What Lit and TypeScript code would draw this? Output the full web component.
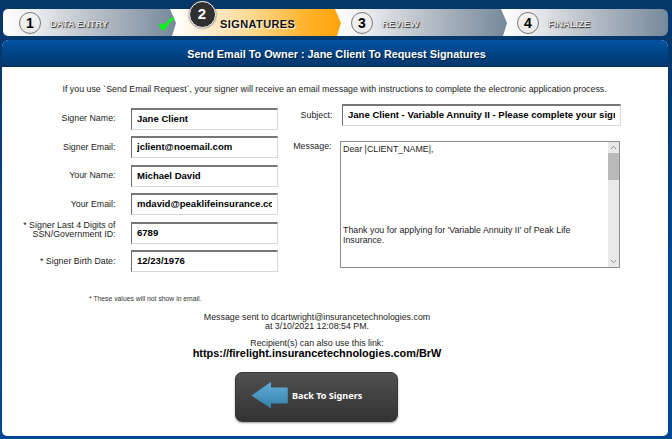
import { LitElement, html, css, svg } from "lit";
import { customElement, property } from "lit/decorators.js";
import { classMap } from "lit/directives/class-map.js";

@customElement("wizard-step")
class WizardStep extends LitElement {
  @property({ type: Number }) number = 1;
  @property() label = "";
  @property({ type: Boolean }) active = false;
  @property({ type: Boolean }) done = false;

  static styles = css`
    :host { display: block; position: relative; height: 27px; }
    .shape {
      position: absolute; inset: 0 -6px 0 0;
      background: linear-gradient(90deg, #fff 0, #f1f2f4 14%, #b9c0c9 52%, #76889b 100%);
      clip-path: polygon(0 0, calc(100% - 6px) 0, 100% 52%, calc(100% - 4px) 100%, 0 100%);
    }
    .active .shape {
      background: linear-gradient(90deg, #fff 5px, #ffedd0 22%, #ffd88f 48%, #ffb22a 80%, #ffa30a 100%);
    }
    :host(:first-child) .shape { border-radius: 5px 0 0 5px; }
    :host(:last-child) .shape { inset: 0; clip-path: none; border-radius: 0 6px 6px 0; }
    .row { position: relative; display: flex; align-items: center; height: 27px; }
    .num {
      box-sizing: border-box; width: 22px; height: 22px; margin-left: 16px;
      border: 1px solid #777; border-radius: 50%;
      background: linear-gradient(#f4f4f4, #e9e9e9);
      color: #000; text-align: center;
      font: bold 14px/20px "Liberation Sans", Arial, sans-serif;
    }
    .label {
      margin: 3px 0 0 9px; white-space: nowrap;
      color: #e6e8ea; text-shadow: 1px 1px 1px #333, 0 0 1px #777;
      font: bold 9.5px/14px "Liberation Sans", Arial, sans-serif;
      letter-spacing: -0.1px;
    }
    .active .num {
      width: 27px; height: 27px; margin: -17px 0 0 18.5px;
      border: 1.5px solid #fff; background: #303030; color: #fff;
      font-size: 15px; line-height: 24px; box-shadow: 0 0 2px #444;
    }
    .active .label {
      margin-left: 4.5px; color: #111; font-size: 11px; letter-spacing: 0.4px;
      text-shadow: 1px 1px 1px #fff;
    }
    .check { position: absolute; right: -5px; top: 7px; width: 17px; height: 15px; }
  `;

  render() {
    return html`<div class=${classMap({ active: this.active })}>
      <div class="shape"></div>
      <div class="row"><span class="num">${this.number}</span><span class="label">${this.label}</span></div>
      ${this.done
        ? html`<svg class="check" viewBox="0 0 17 15"><path d="M0.5 9.2 L3 7 L6 9 C8.5 5.5 11.5 2.3 16 0.4 L16 3.6 C11.5 6.4 9 10 6.6 14.5 L4.6 14.5 Z" fill="#08f51c"/></svg>`
        : ""}
    </div>`;
  }
}

@customElement("app-root")
class AppRoot extends LitElement {
  private fields = [
    ["Signer Name:", "Jane Client"],
    ["Signer Email:", "jclient@noemail.com"],
    ["Your Name:", "Michael David"],
    ["Your Email:", "mdavid@peaklifeinsurance.com"],
    ["* Signer Last 4 Digits of SSN/Government ID:", "6789"],
    ["* Signer Birth Date:", "12/23/1976"],
  ];

  static styles = css`
    :host {
      display: block; box-sizing: border-box; width: 672px; height: 439px; overflow: hidden;
      padding: 9px 4px 0 2px;
      background: linear-gradient(#053769, #053c75 20%, #004795 60%, #004896);
      font: 8.84px/10px "Liberation Sans", Arial, sans-serif; color: #1c1c1c;
    }
    .steps { display: grid; grid-template-columns: 167px 165px 166px 167px; margin-left: 1px; width: 665px; }
    wizard-step:nth-child(1) { z-index: 4; }
    wizard-step:nth-child(2) { z-index: 3; }
    wizard-step:nth-child(3) { z-index: 2; }
    .panel { margin-top: 4px; height: 395.5px; border-radius: 7px 7px 5px 5px; background: #fff; overflow: hidden; box-shadow: 0 0 1px #00264e; }
    .title {
      height: 27px; background: linear-gradient(#0352a4, #014180 60%, #03376a); color: #fff;
      text-align: center; font: bold 10.85px/28px "Liberation Sans", Arial, sans-serif;
      text-shadow: 1px 1px 1px #001d3d; box-shadow: inset 0 -1px #062f58; padding-left: 3px;
    }
    .intro { margin: 17px 0 0 60.5px; white-space: nowrap; height: 10px; }
    .form { display: flex; margin-top: 10px; }
    .left { display: grid; width: 276px; margin-top: 3.5px; grid-auto-rows: 28.5px; align-items: start; }
    .field { display: grid; grid-template-columns: 113.5px 147px; column-gap: 15.5px; align-items: center; }
    .field label { text-align: right; line-height: 9px; padding-left: 18px; }
    .field:nth-child(5) label { margin: -5px 0 0; }
    .box {
      box-sizing: border-box; height: 22px; padding: 0 5px; background: #fff;
      border: 1px solid #d9d9d9; border-top: 2px solid #777; border-left-color: #6d6d6d;
      overflow: hidden; color: #000;
      font: bold 9.55px/17px "Liberation Sans", Arial, sans-serif; white-space: nowrap;
    }
    .clip { overflow: hidden; }
    .right { flex: none; width: 342px; }
    .subject { display: grid; grid-template-columns: 54.5px 279px; column-gap: 9.5px; align-items: center; }
    .subject label, .message label { text-align: right; }
    .message { display: grid; grid-template-columns: 53.5px 280px; column-gap: 8.5px; margin-top: 15px; }
    .area { box-sizing: border-box; width: 280px; height: 127px; border: 1px solid #8c8c8c; display: flex; }
    .body { flex: 1; padding: 2px; white-space: pre-line; line-height: 10.15px; }
    .bar { width: 11px; background: #e9e9e9; display: flex; flex-direction: column; justify-content: space-between; }
    .bar svg { width: 11px; height: 11px; display: block; }
    .thumb { height: 27px; background: #b9b9b9; margin-bottom: auto; }
    .note { margin: 16px 0 0 87px; font-size: 6.8px; line-height: 8px; color: #333; }
    .status { width: 630px; text-align: center; margin-top: 10px; line-height: 9px; }
    .link { font: bold 10.9px/11px "Liberation Sans", Arial, sans-serif; color: #000; margin-top: 0; }
    .gap { margin-top: 8px; }
    .back {
      box-sizing: border-box; margin: 13px 0 0 233px; width: 163px; height: 50px; border-radius: 7px;
      background: linear-gradient(#505050, #333); border: 1px solid #383838; box-shadow: 0 1px 2px #999;
      display: flex; align-items: center; padding-left: 15px; gap: 4px; color: #fff;
      font: bold 9.1px/12px "Noto Sans", sans-serif;
    }
    .back span { margin-top: -2px; }
    .arrow { width: 37px; height: 28px; margin-top: -4px; }
  `;

  private chevron(d: string) {
    return html`<svg viewBox="0 0 11 11">${svg`<path d=${d} fill="none" stroke="#777" stroke-width="0.8"/>`}</svg>`;
  }

  render() {
    return html`
      <div class="steps">
        <wizard-step number="1" label="DATA ENTRY" done></wizard-step>
        <wizard-step number="2" label="SIGNATURES" active></wizard-step>
        <wizard-step number="3" label="REVIEW"></wizard-step>
        <wizard-step number="4" label="FINALIZE"></wizard-step>
      </div>
      <div class="panel">
        <div class="title">Send Email To Owner : Jane Client To Request Signatures</div>
        <div class="intro">If you use \`Send Email Request\`, your signer will receive an email message with instructions to complete the electronic application process.</div>
        <div class="form">
          <div class="left">
            ${this.fields.map(([l, v]) => html`<div class="field"><label>${l}</label><div class="box"><div class="clip">${v}</div></div></div>`)}
          </div>
          <div class="right">
            <div class="subject"><label>Subject:</label><div class="box"><div class="clip">Jane Client - Variable Annuity II - Please complete your signature</div></div></div>
            <div class="message"><label>Message:</label>
              <div class="area">
                <div class="body">Dear |CLIENT_NAME|,${"\n".repeat(8)}Thank you for applying for 'Variable Annuity II' of Peak Life Insurance.</div>
                <div class="bar">${this.chevron("M2.8 7 L5.5 4.3 L8.2 7")}<div class="thumb"></div>${this.chevron("M2.8 4 L5.5 6.7 L8.2 4")}</div>
              </div>
            </div>
          </div>
        </div>
        <div class="note">* These values will not show in email.</div>
        <div class="status">
          <div>Message sent to dcartwright@insurancetechnologies.com</div>
          <div>at 3/10/2021 12:08:54 PM.</div>
          <div class="gap">Recipient(s) can also use this link:</div>
          <div class="link">https://firelight.insurancetechnologies.com/BrW</div>
        </div>
        <div class="back">
          <svg class="arrow" viewBox="0 0 37 28">
            <defs><linearGradient id="blue" x1="0" y1="0" x2="0" y2="1"><stop offset="0" stop-color="#62aedb"/><stop offset="1" stop-color="#347fa9"/></linearGradient></defs>
            <path d="M0.5 14.5 L20 1 V6.5 H36 Q36.8 6.5 36.8 7.5 V21.5 Q36.8 22.5 36 22.5 H20 V27.5 Z" fill="url(#blue)"/>
          </svg>
          <span>Back To Signers</span>
        </div>
      </div>`;
  }
}
